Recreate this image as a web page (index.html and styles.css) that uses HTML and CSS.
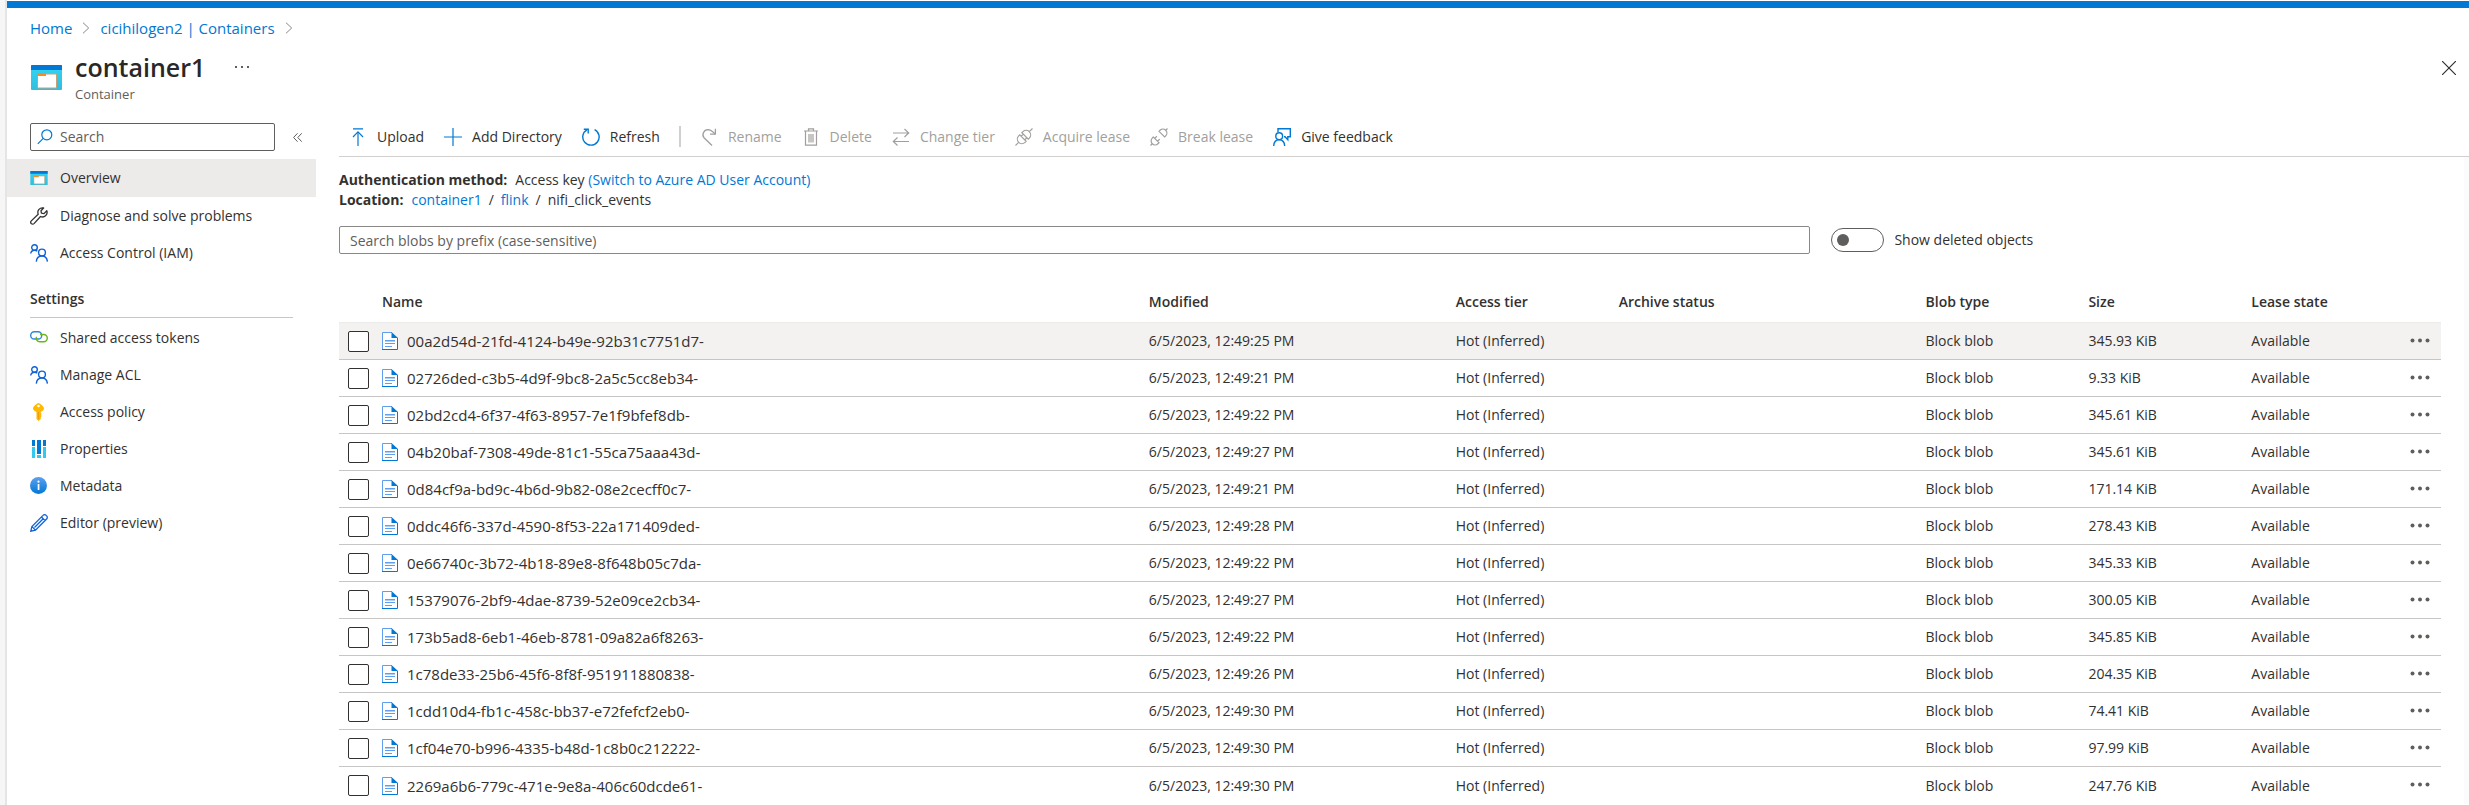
FILE: index.html
```html
<!DOCTYPE html>
<html lang="en">
<head>
<meta charset="utf-8">
<title>container1 - Container</title>
<link rel="stylesheet" href="styles.css">
</head>
<body>
<svg class="sprite" aria-hidden="true">
  <defs>
    <linearGradient id="g-cyan" x1="0" y1="0" x2="0" y2="1"><stop offset="0" stop-color="#32d4f5"/><stop offset="1" stop-color="#32bedd"/></linearGradient>
    <linearGradient id="g-info" x1="0" y1="0" x2="0" y2="1"><stop offset="0" stop-color="#5ea0ef"/><stop offset="1" stop-color="#0078d4"/></linearGradient>
  </defs>
  <symbol id="i-container" viewBox="0 0 31 25">
    <rect width="31" height="25" rx="1" fill="url(#g-cyan)"/>
    <path d="M0 1a1 1 0 0 1 1-1h29a1 1 0 0 1 1 1v4H0z" fill="#0078d4"/>
    <path d="M6.500 9h19v14h-19z" fill="#fff" stroke="#c3a27a"/>
    <path d="M6 8h9v3H6z" fill="#f78d1e"/>
  </symbol>
  <symbol id="i-wrench" viewBox="0 0 18 18">
    <path d="M16.800 3.800a4.600 4.600 0 0 1-6.300 5.700L4 16.600a1.900 1.900 0 0 1-2.700-2.700L8.200 7.200A4.600 4.600 0 0 1 13.600 1L11 3.800l.4 2.400 2.600.4z" fill="none" stroke="#323130" stroke-width="1.300" stroke-linejoin="round"/>
  </symbol>
  <symbol id="i-people" viewBox="0 0 18 18">
    <g fill="none" stroke="#0f62d6" stroke-width="1.400"><circle cx="4.500" cy="3.500" r="2.800"/><path d="M.7 9.500C1 7.400 2.600 6.300 4.600 6.300c1.200 0 2 .4 2.700 1"/><circle cx="12" cy="8.500" r="3.400"/><path d="M6.300 17.600c.3-3.400 2.600-5.600 5.700-5.600s5 2.200 5.400 5.600"/></g>
  </symbol>
  <symbol id="i-link" viewBox="0 0 18 18">
    <g fill="none" stroke-width="1.400"><rect x=".7" y="2.700" width="11" height="7.300" rx="3.600" stroke="#2b88d8"/><path d="M10 5.500h3.700a3.600 3.600 0 0 1 0 7.200H9.800a3.600 3.600 0 0 1-3.300-5" stroke="#6bb51e"/></g>
  </symbol>
  <symbol id="i-key" viewBox="0 0 18 18">
    <path d="M8.500 0c1 0 5.500 3.500 5.500 5.400 0 1.200-1.500 2.700-3.200 3.600v1l1 1-1 1 1 1-1 1v2l-2.300 2-2-2V9C4.800 8.200 3 6.600 3 5.400 3 3.500 7.500 0 8.500 0z" fill="#ffb900"/><circle cx="8.500" cy="3" r="1.300" fill="#fff"/><path d="M7.800 9h1.100v7.500l-1.100-1z" fill="#f29a0b"/>
  </symbol>
  <symbol id="i-bars" viewBox="0 0 18 18">
    <path d="M2 0h3v6H2zM7 0h4v14H7zM13 0h3v6h-3z" fill="#0078d4"/><path d="M2 7h3v11H2zM13 7h3v11h-3zM7 15h4v3H7z" fill="#32c8f0"/>
  </symbol>
  <symbol id="i-info" viewBox="0 0 18 18">
    <circle cx="8.500" cy="8.500" r="8.500" fill="url(#g-info)"/><path d="M7.700 7h1.700v6H7.700z" fill="#fff"/><circle cx="8.500" cy="4.700" r="1.100" fill="#fff"/>
  </symbol>
  <symbol id="i-pencil" viewBox="0 0 18 18">
    <path d="M.8 17.200l1.100-4.700L13 1.400a2.200 2.200 0 0 1 3.200 0l.4.400a2.200 2.200 0 0 1 0 3.200L5.500 16.100zM11.500 3l3.600 3.600M2 12.600l3.500 3.500M4.500 13.500l8.700-8.700" fill="none" stroke="#0f62d6" stroke-width="1.300"/>
  </symbol>
  <symbol id="i-search" viewBox="0 0 16 16">
    <g fill="none" stroke="#0078d4" stroke-width="1.200"><circle cx="9.800" cy="5.800" r="5"/><path d="M6.200 9.400L.8 14.800"/></g>
  </symbol>
  <symbol id="i-upload" viewBox="0 0 18 18">
    <g fill="none" stroke="#0078d4" stroke-width="1.200"><path d="M4 .9h10M9 4v14"/><path d="M4 9l5-5.200L14 9"/></g>
  </symbol>
  <symbol id="i-plus" viewBox="0 0 18 18"><path d="M9 0v18M0 9h18" stroke="#0078d4" stroke-width="1.200"/></symbol>
  <symbol id="i-refresh" viewBox="0 0 18 18">
    <g fill="none" stroke="#0078d4" stroke-width="1.400"><path d="M12.600 1.600a8.200 8.200 0 1 1-7.700.2"/><path d="M1.800 1.200h4.400v4.400"/></g>
  </symbol>
  <symbol id="i-rename" viewBox="0 0 18 18">
    <g fill="none" stroke="#a19f9d" stroke-width="1.300"><path d="M12 17.500L4 9.700C1.600 6.800 3.600 1.800 8 1.700c3 0 4 1.200 7 4.300"/><path d="M15.400.8v5.400H10"/></g>
  </symbol>
  <symbol id="i-trash" viewBox="0 0 18 18">
    <path d="M2 3h14M6.500 3V.8h5V3M3.500 3v14.200h11V3M7 6v8.500M9 6v8.500M11 6v8.500" fill="none" stroke="#a19f9d" stroke-width="1.200"/>
  </symbol>
  <symbol id="i-swap" viewBox="0 0 18 18">
    <path d="M1 5h15.500M12.500 1l4.200 4-4.200 4M17 13.500H1.500M5.500 9.500l-4.200 4 4.200 4" fill="none" stroke="#a19f9d" stroke-width="1.200"/>
  </symbol>
  <symbol id="i-plug" viewBox="0 0 18 18">
    <g fill="none" stroke="#a19f9d" stroke-width="1.200" transform="rotate(-45 9 9)"><path d="M-3 9h4.500M16.500 9H21"/><path d="M7.500 4.500H6a4.500 4.500 0 0 0 0 9h1.500zM10.500 4.500H12a4.500 4.500 0 0 1 0 9h-1.500zM7.500 6.500h3M7.500 11.500h3"/></g>
  </symbol>
  <symbol id="i-unplug" viewBox="0 0 18 18">
    <g fill="none" stroke="#a19f9d" stroke-width="1.200" transform="rotate(-45 9 9)"><path d="M-3 9h2.500M18.500 9H21"/><path d="M5 5H3.500a4 4 0 0 0 0 8H5zM13 5h1.500a4 4 0 0 1 0 8H13zM5 7h3M5 11h3"/></g>
  </symbol>
  <symbol id="i-feedback" viewBox="0 0 18 18">
    <g fill="none" stroke="#0078d4" stroke-width="1.400"><path d="M5 4V.8h12.300v8h-2.500v3L12 8.800h-1"/><circle cx="6.200" cy="8.200" r="3.400"/><path d="M.7 18c.2-4 2.500-6.200 5.500-6.200s5.200 2.200 5.500 6.200"/></g>
  </symbol>
  <symbol id="i-file" viewBox="0 0 16 18">
    <path d="M.5.500h9.300l5.700 5.700v11.300H.5z" fill="#fff"/><path d="M.5 17.500V.5h9.500" fill="none" stroke="#5ea0ef"/><path d="M0 17.500h15.500V6" fill="none" stroke="#0078d4"/><path d="M9.500 0L16 6H9.500z" fill="#0078d4"/><path d="M3 8h10v1.500H3zM3 11h10v1H3zM3 14h7v1H3z" fill="#5ea0ef"/>
  </symbol>
  <symbol id="i-more" viewBox="0 0 20 5"><g fill="#605e5c"><circle cx="2.500" cy="2.500" r="2"/><circle cx="10" cy="2.500" r="2"/><circle cx="17.500" cy="2.500" r="2"/></g></symbol>
  <symbol id="i-chevron" viewBox="0 0 8 12"><path d="M1 .7L6.700 6 1 11.300" fill="none" stroke="#8a8886"/></symbol>
</svg>
<div class="page">
  <div class="topbar"></div>
  <nav class="breadcrumb" aria-label="Breadcrumb">
    <a href="#">Home</a><svg class="chev"><use href="#i-chevron"/></svg>
    <a href="#">cicihilogen2 | Containers</a><svg class="chev"><use href="#i-chevron"/></svg>
  </nav>
  <header class="head">
    <svg class="head-icon"><use href="#i-container"/></svg>
    <div class="head-text">
      <div class="title-row"><h1>container1</h1><button class="dots" aria-label="More"><svg viewBox="0 0 14 2"><path d="M0 0h2v2H0zM6 0h2v2H6zM12 0h2v2h-2z" fill="#605e5c"/></svg></button></div>
      <p>Container</p>
    </div>
    <button class="close" aria-label="Close"><svg viewBox="0 0 14 14"><path d="M0 0l14 14M14 0L0 14" stroke="#323130" stroke-width="1.200"/></svg></button>
  </header>
  <div class="body">
    <aside class="side">
      <div class="side-search">
        <label class="searchbox"><svg><use href="#i-search"/></svg><input type="text" placeholder="Search" aria-label="Search"></label>
        <button class="collapse" aria-label="Collapse"><svg viewBox="0 0 9 9"><path d="M4.500.3L.6 4.500l3.900 4.200M8.700.3L4.800 4.500l3.900 4.200" fill="none" stroke="#605e5c"/></svg></button>
      </div>
      <nav class="menu">
        <a href="#" class="active"><svg class="mini"><use href="#i-container"/></svg>Overview</a>
        <a href="#"><svg><use href="#i-wrench"/></svg>Diagnose and solve problems</a>
        <a href="#"><svg><use href="#i-people"/></svg>Access Control (IAM)</a>
      </nav>
      <h2>Settings</h2>
      <nav class="menu">
        <a href="#"><svg><use href="#i-link"/></svg>Shared access tokens</a>
        <a href="#"><svg><use href="#i-people"/></svg>Manage ACL</a>
        <a href="#"><svg><use href="#i-key"/></svg>Access policy</a>
        <a href="#"><svg><use href="#i-bars"/></svg>Properties</a>
        <a href="#"><svg><use href="#i-info"/></svg>Metadata</a>
        <a href="#"><svg><use href="#i-pencil"/></svg>Editor (preview)</a>
      </nav>
    </aside>
    <main class="main">
      <div class="toolbar">
        <button><svg><use href="#i-upload"/></svg>Upload</button>
        <button><svg><use href="#i-plus"/></svg>Add Directory</button>
        <button><svg><use href="#i-refresh"/></svg>Refresh</button>
        <span class="sep"></span>
        <button disabled><svg><use href="#i-rename"/></svg>Rename</button>
        <button disabled><svg><use href="#i-trash"/></svg>Delete</button>
        <button disabled><svg><use href="#i-swap"/></svg>Change tier</button>
        <button disabled><svg><use href="#i-plug"/></svg>Acquire lease</button>
        <button disabled><svg><use href="#i-unplug"/></svg>Break lease</button>
        <button><svg><use href="#i-feedback"/></svg>Give feedback</button>
      </div>
      <div class="content">
        <div class="meta">
          <p><b>Authentication method:</b><span>Access key <a href="#">(Switch to Azure AD User Account)</a></span></p>
          <p><b>Location:</b><span class="path"><a href="#">container1</a><i>/</i><a href="#">flink</a><i>/</i>nifi_click_events</span></p>
        </div>
        <div class="filter">
          <input type="text" placeholder="Search blobs by prefix (case-sensitive)" aria-label="Search blobs by prefix">
          <label class="toggle"><input type="checkbox" role="switch">Show deleted objects</label>
        </div>
        <table>
          <colgroup><col class="c-check"><col><col class="c-wide"><col class="c-slim"><col class="c-wide"><col class="c-slim"><col class="c-slim"><col class="c-lease"><col class="c-more"></colgroup>
          <thead><tr><th></th><th>Name</th><th>Modified</th><th>Access tier</th><th>Archive status</th><th>Blob type</th><th>Size</th><th colspan="2">Lease state</th></tr></thead>
          <tbody id="rows"></tbody>
        </table>
      </div>
    </main>
  </div>
</div>
<script src="rows.js"></script>
</body>
</html>
```

FILE: rows.js
```js
const blobs = [
  ["00a2d54d-21fd-4124-b49e-92b31c7751d7-", "25", "345.93"],
  ["02726ded-c3b5-4d9f-9bc8-2a5c5cc8eb34-", "21", "9.33"],
  ["02bd2cd4-6f37-4f63-8957-7e1f9bfef8db-", "22", "345.61"],
  ["04b20baf-7308-49de-81c1-55ca75aaa43d-", "27", "345.61"],
  ["0d84cf9a-bd9c-4b6d-9b82-08e2cecff0c7-", "21", "171.14"],
  ["0ddc46f6-337d-4590-8f53-22a171409ded-", "28", "278.43"],
  ["0e66740c-3b72-4b18-89e8-8f648b05c7da-", "22", "345.33"],
  ["15379076-2bf9-4dae-8739-52e09ce2cb34-", "27", "300.05"],
  ["173b5ad8-6eb1-46eb-8781-09a82a6f8263-", "22", "345.85"],
  ["1c78de33-25b6-45f6-8f8f-951911880838-", "26", "204.35"],
  ["1cdd10d4-fb1c-458c-bb37-e72fefcf2eb0-", "30", "74.41"],
  ["1cf04e70-b996-4335-b48d-1c8b0c212222-", "30", "97.99"],
  ["2269a6b6-779c-471e-9e8a-406c60dcde61-", "30", "247.76"]
];

document.getElementById("rows").innerHTML = blobs.map(([name, sec, size]) => `
  <tr>
    <td><input type="checkbox" aria-label="Select ${name}"></td>
    <td><span class="name"><svg><use href="#i-file"/></svg>${name}</span></td>
    <td>6/5/2023, 12:49:${sec} PM</td>
    <td>Hot (Inferred)</td>
    <td></td>
    <td>Block blob</td>
    <td>${size} KiB</td>
    <td>Available</td>
    <td><button class="row-more" aria-label="More actions"><svg><use href="#i-more"/></svg></button></td>
  </tr>`).join("");
```

FILE: styles.css
```css
* { box-sizing: border-box; }
body {
  margin: 0;
  background: #fff;
  color: #323130;
  font: 14px/20px "Open Sans", "Noto Sans", sans-serif;
  overflow: hidden;
}
button, input { font: inherit; color: inherit; }
button { background: none; border: 0; padding: 0; }
a { color: #0078d4; text-decoration: none; }
p, h1, h2 { margin: 0; }
svg { display: block; flex: none; }
.sprite { position: absolute; width: 0; height: 0; }

.page {
  min-height: 100vh;
  border-left: 2px solid #e5e5e5;
  margin-left: 5px;
  box-shadow: -5px 0 #f6f6f6;
}
.topbar { height: 8px; border-top: 1px solid #fff; background: #0078d4; }

.breadcrumb { display: flex; align-items: center; gap: 10px; padding: 10px 24px 0 23px; font-size: 15px; }
.chev { width: 8px; height: 12px; }

.head { display: flex; align-items: flex-start; padding: 12px 13px 0 24px; }
.head-icon { width: 31px; height: 25px; margin-top: 15px; }
.head-text { flex: 1; padding-left: 13px; }
.title-row { display: flex; align-items: center; gap: 30px; }
h1 { font-size: 25px; line-height: 34px; font-weight: 600; color: #292827; }
.dots svg { width: 14px; height: 2px; }
.head-text p { font-size: 13px; color: #605e5c; }
.close { margin-top: 11px; }
.close svg { width: 14px; height: 14px; }

.body { display: flex; margin-top: 13px; }
.side { flex: none; width: 309px; padding-top: 6px; }
.side-search { display: flex; align-items: center; gap: 18px; padding: 0 14px 0 23px; margin-bottom: 8px; }
.searchbox {
  display: flex; align-items: center; gap: 7px;
  width: 245px; height: 28px; padding-left: 6px;
  border: 1px solid #605e5c; border-radius: 2px;
}
.searchbox svg { width: 16px; height: 16px; }
.searchbox input { flex: 1; min-width: 0; border: 0; padding: 0; outline: 0; background: none; }
::placeholder { color: #605e5c; opacity: 1; }
.collapse svg { width: 9px; height: 9px; }
.menu a {
  display: flex; align-items: center; gap: 12px;
  height: 37px; padding-left: 23px; color: #323130;
}
.menu a.active { background: #edebe9; height: 38px; }
.menu svg { width: 18px; height: 18px; }
.menu .mini { height: 14px; }
h2 {
  margin: 18px 23px 1px;
  padding-bottom: 8px;
  border-bottom: 1px solid #c8c6c4;
  font-size: 14px; line-height: 20px; font-weight: 600;
}

.main { flex: 1; min-width: 0; padding-left: 23px; }
.toolbar { display: flex; align-items: center; height: 40px; border-bottom: 1px solid #d2d0ce; }
.toolbar button { display: flex; align-items: center; gap: 10px; padding: 0 10px; }
.toolbar button:disabled { color: #a19f9d; }
.toolbar svg { width: 18px; height: 18px; }
.sep { width: 2px; height: 21px; margin: 0 9px; background: #d2d0ce; }

.content { padding: 13px 23px 0 0; border-right: 5px solid #fbfbfb; }
.meta p { display: flex; gap: 8px; }
.meta b { font-weight: 700; }
.path { display: flex; gap: 7px; }
.path i { font-style: normal; }
.filter { display: flex; align-items: center; margin-top: 16px; }
.filter > input {
  flex: none; width: 70%; height: 28px; padding: 0 10px;
  border: 1px solid #8a8886; border-radius: 2px; background: #fff;
}
.toggle { display: flex; align-items: center; gap: 10px; margin-left: 21px; }
.toggle input {
  appearance: none; width: 53px; height: 24px; margin: 0; padding: 5px;
  border: 1px solid #605e5c; border-radius: 12px;
}
.toggle input::before { content: ""; display: block; width: 12px; height: 12px; border-radius: 50%; background: #605e5c; }

table { width: 100%; table-layout: fixed; border-collapse: separate; border-spacing: 0; margin-top: 28px; }
.c-check { width: 43px; }
.c-wide { width: 14.600%; }
.c-slim { width: 7.750%; }
.c-lease { width: 7.550%; }
.c-more { width: 31px; }
th, td { padding: 0; text-align: left; white-space: nowrap; }
th { height: 41px; font-weight: 600; border-bottom: 1px solid #edebe9; }
td { height: 37px; border-bottom: 1px solid #c8c6c4; }
tbody tr:first-child td { background: #f3f2f1; }
tbody tr:last-child td { border-bottom: 0; }
td input {
  appearance: none; display: block; width: 21px; height: 21px; margin: 0 0 0 9px;
  border: 1px solid #323130; border-radius: 2px; background: #fff;
}
.name { display: flex; align-items: center; gap: 9px; font-size: 15px; }
.name svg { width: 16px; height: 18px; }
.row-more { display: block; padding-bottom: 2px; }
.row-more svg { width: 20px; height: 5px; }
```
